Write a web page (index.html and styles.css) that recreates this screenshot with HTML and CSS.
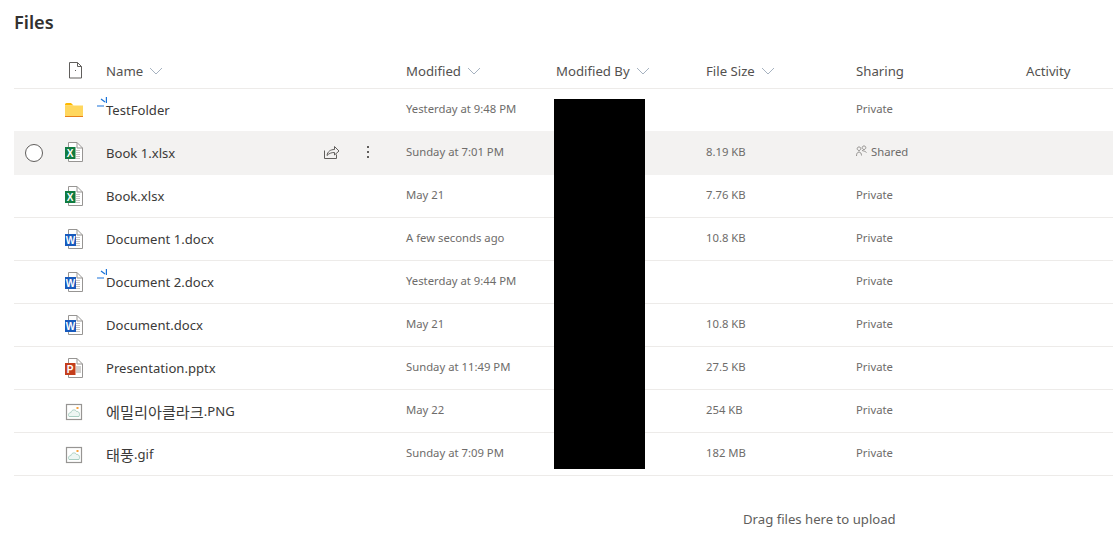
FILE: index.html
```html
<!DOCTYPE html>
<html lang="en">
<head>
    <meta charset="UTF-8">
    <title>Files</title>
    <link rel="stylesheet" href="styles.css">
</head>
<body>
    <svg class="defs" width="0" height="0">
        <symbol id="page" viewBox="0 0 20 20">
            <path d="M4.500 .500H13L18.500 6V19.500H4.500Z" fill="#fff" stroke="#979593"/>
            <path d="M13 .500V6H18.500" fill="none" stroke="#979593"/>
        </symbol>
        <symbol id="lines" viewBox="0 0 20 20">
            <path d="M12 8.500H16M12 10.500H16M12 12.500H16M12 14.500H16M12 16.500H16" stroke="#c8c6c4"/>
        </symbol>
        <symbol id="excel" viewBox="0 0 20 20">
            <use href="#page" width="20" height="20"/>
            <use href="#lines" width="20" height="20"/>
            <rect x="1" y="5" width="10.500" height="12" fill="#107c41"/>
            <text x="6.200" y="14.700" class="badge">X</text>
        </symbol>
        <symbol id="word" viewBox="0 0 20 20">
            <use href="#page" width="20" height="20"/>
            <use href="#lines" width="20" height="20"/>
            <rect x="1" y="5" width="11" height="12" fill="#185abd"/>
            <text x="6.500" y="14.700" class="badge">W</text>
        </symbol>
        <symbol id="ppt" viewBox="0 0 20 20">
            <use href="#page" width="20" height="20"/>
            <rect x="12" y="8" width="5" height="7" fill="#d2d0ce"/>
            <rect x="1" y="5" width="10.500" height="12" fill="#c43e1c"/>
            <text x="6.200" y="14.700" class="badge">P</text>
        </symbol>
        <symbol id="picture" viewBox="0 0 20 20">
            <rect x="2.500" y="3.500" width="15" height="15" fill="#fff" stroke="#979593" stroke-width="1.200"/>
            <path d="M5 15.500C3.500 13 5.500 11.500 7 11.500C7.500 8.500 11.500 8 12.500 10.500C14.500 10 16.500 12.500 15 15.500Z" fill="#eef6f3" stroke="#a9cfc2"/>
            <rect x="12.500" y="6" width="2" height="2" fill="#f7a23b"/>
        </symbol>
    </svg>

    <h1 class="title">Files</h1>

    <div class="list">
        <div class="row head">
            <div></div>
            <div class="icon-cell">
                <svg class="head-file" width="15" height="17" viewBox="0 0 15 17">
                    <path d="M1.500 .500H9.500L13.500 4.500V16H1.500Z M9.500 .500V4.500H13.500" fill="none" stroke="#605e5c"/>
                    <rect x="7" y="8" width="1" height="1" fill="#605e5c"/>
                </svg>
            </div>
            <div class="sort">Name <svg class="chev" width="14" height="8" viewBox="0 0 14 8"><path d="M1 1L7 7L13 1" fill="none" stroke="#a6b2c0"/></svg></div>
            <div class="sort">Modified <svg class="chev" width="14" height="8" viewBox="0 0 14 8"><path d="M1 1L7 7L13 1" fill="none" stroke="#a6b2c0"/></svg></div>
            <div class="sort">Modified By <svg class="chev" width="14" height="8" viewBox="0 0 14 8"><path d="M1 1L7 7L13 1" fill="none" stroke="#a6b2c0"/></svg></div>
            <div class="sort">File Size <svg class="chev" width="14" height="8" viewBox="0 0 14 8"><path d="M1 1L7 7L13 1" fill="none" stroke="#a6b2c0"/></svg></div>
            <div>Sharing</div>
            <div>Activity</div>
        </div>

        <div class="row">
            <div></div>
            <div class="icon-cell">
                <svg width="18" height="14" viewBox="0 0 18 14" class="folder">
                    <path d="M0 1.500Q0 0 1.500 0H6L8.500 2.500H0Z" fill="#ffb900"/>
                    <rect y="2.500" width="18" height="10.500" fill="#ffd75e"/>
                    <rect y="13" width="18" height="1" fill="#e8811a"/>
                </svg>
            </div>
            <div class="name"><svg class="new-mark" width="10" height="10" viewBox="0 0 10 10"><path d="M9.400 0V6M4 2L8 5M0 9H7" fill="none" stroke="#1a73d9" stroke-width="1.200"/></svg>TestFolder</div>
            <div class="meta">Yesterday at 9:48 PM</div>
            <div></div>
            <div class="meta"></div>
            <div class="meta">Private</div>
            <div></div>
        </div>

        <div class="row hovered">
            <div class="check-cell"><span class="check"></span></div>
            <div class="icon-cell"><svg class="file" width="20" height="20"><use href="#excel"/></svg></div>
            <div class="name">
                Book 1.xlsx
                <span class="actions">
                    <svg width="16" height="14" viewBox="0 0 16 14"><path d="M.500 5.500V13.500H12.500V9.500M3 10.500C3.500 6.500 6.500 4.500 10.500 4.500V1.500L15 6L10.500 10V7.500C7 7.500 5 8.500 3 10.500Z" fill="none" stroke="#605e5c"/></svg>
                    <svg width="4" height="14" viewBox="0 0 4 14"><path d="M1 1h2v2H1zM1 6h2v2H1zM1 11h2v2H1z" fill="#605e5c"/></svg>
                </span>
            </div>
            <div class="meta">Sunday at 7:01 PM</div>
            <div></div>
            <div class="meta">8.19 KB</div>
            <div class="meta shared">
                <svg width="11" height="12" viewBox="0 0 11 12"><path d="M3 5.500a1.800 1.800 0 1 1 .01 0ZM.500 11C.500 8.500 1.500 7 3 7S5.500 8.500 5.500 10.500M8 4.500a1.800 1.800 0 1 1 .01 0ZM6 5.500C7.500 6 9 6 10.500 7.500" fill="none" stroke="#8a8886" stroke-width=".9"/></svg>
                Shared
            </div>
            <div></div>
        </div>

        <div class="row">
            <div></div>
            <div class="icon-cell"><svg class="file" width="20" height="20"><use href="#excel"/></svg></div>
            <div class="name">Book.xlsx</div>
            <div class="meta">May 21</div>
            <div></div>
            <div class="meta">7.76 KB</div>
            <div class="meta">Private</div>
            <div></div>
        </div>

        <div class="row">
            <div></div>
            <div class="icon-cell"><svg class="file" width="20" height="20"><use href="#word"/></svg></div>
            <div class="name">Document 1.docx</div>
            <div class="meta">A few seconds ago</div>
            <div></div>
            <div class="meta">10.8 KB</div>
            <div class="meta">Private</div>
            <div></div>
        </div>

        <div class="row">
            <div></div>
            <div class="icon-cell"><svg class="file" width="20" height="20"><use href="#word"/></svg></div>
            <div class="name"><svg class="new-mark" width="10" height="10" viewBox="0 0 10 10"><path d="M9.400 0V6M4 2L8 5M0 9H7" fill="none" stroke="#1a73d9" stroke-width="1.200"/></svg>Document 2.docx</div>
            <div class="meta">Yesterday at 9:44 PM</div>
            <div></div>
            <div class="meta"></div>
            <div class="meta">Private</div>
            <div></div>
        </div>

        <div class="row">
            <div></div>
            <div class="icon-cell"><svg class="file" width="20" height="20"><use href="#word"/></svg></div>
            <div class="name">Document.docx</div>
            <div class="meta">May 21</div>
            <div></div>
            <div class="meta">10.8 KB</div>
            <div class="meta">Private</div>
            <div></div>
        </div>

        <div class="row">
            <div></div>
            <div class="icon-cell"><svg class="file" width="20" height="20"><use href="#ppt"/></svg></div>
            <div class="name">Presentation.pptx</div>
            <div class="meta">Sunday at 11:49 PM</div>
            <div></div>
            <div class="meta">27.5 KB</div>
            <div class="meta">Private</div>
            <div></div>
        </div>

        <div class="row">
            <div></div>
            <div class="icon-cell"><svg class="file" width="20" height="20"><use href="#picture"/></svg></div>
            <div class="name"><span class="ko">에밀리아클라크</span>.PNG</div>
            <div class="meta">May 22</div>
            <div></div>
            <div class="meta">254 KB</div>
            <div class="meta">Private</div>
            <div></div>
        </div>

        <div class="row">
            <div></div>
            <div class="icon-cell"><svg class="file" width="20" height="20"><use href="#picture"/></svg></div>
            <div class="name"><span class="ko">태풍</span>.gif</div>
            <div class="meta">Sunday at 7:09 PM</div>
            <div></div>
            <div class="meta">182 MB</div>
            <div class="meta">Private</div>
            <div></div>
        </div>

        <div class="redacted"></div>
    </div>

    <p class="drop-hint">Drag files here to upload</p>
</body>
</html>
```

FILE: styles.css
```css
html, body {
    overflow: hidden;
}
body {
    margin: 0;
    padding: 0 0 0 14px;
    background-color: #fff;
    color: #3b3a39;
    font-family: "Noto Sans", "Noto Sans CJK KR", sans-serif;
    font-size: 13.100px;
}
.defs {
    display: none;
}
.badge {
    fill: #fff;
    font-family: "Liberation Sans", sans-serif;
    font-size: 10px;
    font-weight: 700;
    text-anchor: middle;
}
.title {
    margin: 0;
    padding-top: 8px;
    height: 50px;
    box-sizing: border-box;
    color: #323130;
    font-size: 18.200px;
    line-height: 28px;
    font-weight: 600;
}
.list {
    position: relative;
}
.row {
    display: grid;
    grid-template-columns: 40px 52px 300px 150px 150px 150px 170px 1fr;
    align-items: center;
    height: 43px;
    box-sizing: border-box;
    border-bottom: 1px solid #edebe9;
}
.head {
    height: 39px;
    padding-top: 3px;
    font-size: 13.200px;
    color: #53514f;
}
.hovered {
    height: 44px;
    margin-top: -1px;
    background-color: #f3f2f1;
    border-bottom-color: #f3f2f1;
}
.sort {
    display: flex;
    align-items: center;
    gap: 6px;
}
.chev {
    margin-top: 1px;
}
.icon-cell {
    display: flex;
    padding-left: 10px;
}
.head-file {
    margin-left: 4px;
}
.folder {
    margin-left: 1px;
}
.file {
    margin-top: -1px;
}
.name {
    position: relative;
    display: flex;
    align-items: center;
    white-space: nowrap;
}
.ko {
    font-size: 15.200px;
}
.new-mark {
    position: absolute;
    left: -9px;
    top: -4px;
}
.actions {
    position: absolute;
    left: 218px;
    top: 1px;
    display: flex;
    align-items: center;
    gap: 26px;
}
.meta {
    margin-top: -3px;
    font-size: 11.300px;
    color: #6e6c6a;
}
.shared {
    display: flex;
    align-items: center;
    gap: 4px;
}
.check-cell {
    display: flex;
    justify-content: center;
}
.check {
    width: 18px;
    height: 18px;
    box-sizing: border-box;
    border: 1px solid #605e5c;
    border-radius: 50%;
    background-color: #fff;
}
.redacted {
    position: absolute;
    left: 540px;
    top: 49px;
    width: 91px;
    height: 370px;
    background-color: #000;
}
.drop-hint {
    margin: 34px 0 0 729px;
    font-size: 13.150px;
    line-height: 18px;
    color: #605e5c;
}
```
